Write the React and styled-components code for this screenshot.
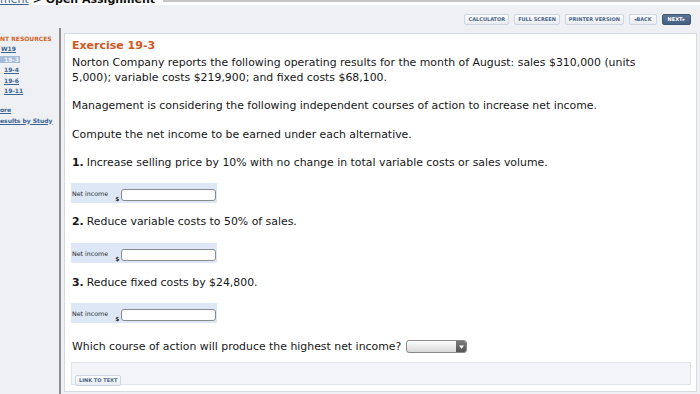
import React from 'react';
import styled, { createGlobalStyle } from 'styled-components';

const Global = createGlobalStyle`
  html, body { margin: 0; padding: 0; background: #eef0f3; }
  body { font-family: "DejaVu Sans", Verdana, sans-serif; }
  * { box-sizing: border-box; }
`;

const Page = styled.div`
  width: 700px;
  height: 394px;
  overflow: hidden;
  display: flex;
  flex-direction: column;
  background: #eef0f3;
`;

const CrumbRow = styled.div`
  height: 5px;
  flex-shrink: 0;
  display: flex;
  background: #fff;
  overflow: hidden;
`;

const Crumb = styled.div`
  font: bold 11px/13px "DejaVu Sans", Verdana, sans-serif;
  margin-top: -7px;
  white-space: nowrap;
  color: #111;
  padding-right: 8px;
`;

const CrumbLink = styled.span`
  font-weight: normal;
  color: #3d6290;
  text-decoration: underline;
`;

const CrumbFill = styled.div`
  flex: 1;
  border-top: 2px solid #c4c4c4;
`;

const Toolbar = styled.div`
  flex-shrink: 0;
  display: flex;
  justify-content: flex-end;
  align-items: flex-end;
  gap: 5px;
  padding: 9px 9px 3px 0;
  height: 23px;
`;

const Btn = styled.span`
  display: inline-flex;
  align-items: center;
  height: 11px;
  padding: 0 ${p => p.$pad || 3}px;
  font: bold 5px/1 "DejaVu Sans", Verdana, sans-serif;
  white-space: nowrap;
  border-radius: 2px;
  color: ${p => (p.$primary ? '#ffffff' : '#4c6384')};
  background: ${p => (p.$primary ? 'linear-gradient(#5b7595, #465f7e)' : 'linear-gradient(#fcfdfe, #e8ecf1)')};
  border: 1px solid ${p => (p.$primary ? '#3f5674' : '#cfd6df')};
`;

const Body = styled.div`
  flex: 1;
  min-height: 0;
  display: flex;
`;

const Sidebar = styled.div`
  width: 61px;
  flex-shrink: 0;
  border-right: 2px solid #8e8e8e;
  padding-top: 5px;
  overflow: hidden;
  white-space: nowrap;
`;

const SideHead = styled.div`
  font: bold 6px/11px "DejaVu Sans", Verdana, sans-serif;
  color: #d4622a;
`;

const SideItem = styled.div`
  font: bold 6px/10.5px "DejaVu Sans", Verdana, sans-serif;
  margin-top: ${p => p.$gap || 0}px;
  padding-left: ${p => p.$indent || 0}px;
`;

const SideLink = styled.span`
  color: ${p => (p.$active ? '#eef3fa' : '#3b6592')};
  background: ${p => (p.$active ? '#a6bbd8' : 'transparent')};
  text-decoration: underline;
  padding-left: ${p => (p.$active ? 4 : 0)}px;
  margin-left: ${p => (p.$active ? -4 : 0)}px;
  padding-right: ${p => (p.$active ? 1 : 0)}px;
`;

const Main = styled.div`
  flex: 1;
  display: flex;
  padding: 5px 3px 2px 3px;
`;

const Panel = styled.div`
  flex: 1;
  background: #fff;
  border: 1px solid #d6dae0;
  padding: 4px 6px 3px 7px;
  display: flex;
  flex-direction: column;
  align-items: flex-start;
  color: #161616;
`;

const Heading = styled.div`
  font: bold 11px/15px "DejaVu Sans", Verdana, sans-serif;
  color: #d2571e;
  margin-bottom: 2px;
`;

const Para = styled.p`
  margin: 0 0 ${p => p.$mb ?? 13}px;
  font: 10.9px/15px "DejaVu Sans", Verdana, sans-serif;
  max-width: 600px;
  display: ${p => (p.$block ? 'block' : 'flex')};
  align-items: center;
`;

const Num = styled.b`
  font-weight: bold;
  margin-right: 3px;
`;

const AnswerRow = styled.div`
  display: flex;
  align-items: flex-start;
  height: 20px;
  width: 146px;
  margin: 0 0 ${p => p.$mb ?? 12}px -1px;
  padding-left: 1px;
  background: #dde7f6;
  white-space: nowrap;
`;

const AnswerLabel = styled.span`
  font: 6.3px/7px "DejaVu Sans", Verdana, sans-serif;
  color: #2a2a2a;
  margin-top: 6.5px;
  flex-shrink: 0;
`;

const Dollar = styled.span`
  font: bold 6px/7px "DejaVu Sans", Verdana, sans-serif;
  color: #333;
  margin: 11.5px 2px 0 7px;
  flex-shrink: 0;
`;

const AnswerInput = styled.input`
  width: 95px;
  flex-shrink: 0;
  height: 12px;
  margin-top: 6px;
  padding: 0 3px;
  border: 1px solid #8b8b8b;
  border-radius: 3px;
  background: #fff;
  outline: none;
`;

const SelectBox = styled.span`
  display: inline-flex;
  width: 61px;
  height: 13px;
  margin-left: 5px;
  border: 1px solid #8a8a8a;
  border-radius: 3px;
  overflow: hidden;
  background: linear-gradient(#fdfdfd, #d9d9d9);
  justify-content: flex-end;
`;

const SelectArrow = styled.span`
  width: 10px;
  display: flex;
  align-items: center;
  justify-content: center;
  background: linear-gradient(#7a7a7a, #555);
`;

const LinkBox = styled.div`
  align-self: stretch;
  margin: 0 -1px;
  height: 23px;
  padding: 4px 3px;
  background: #f3f5f9;
  border: 1px solid #dfe3e9;
`;

export default function App() {
  return (
    <Page>
      <Global />
      <CrumbRow>
        <Crumb>
          <CrumbLink>ment</CrumbLink> &gt; Open Assignment
        </Crumb>
        <CrumbFill />
      </CrumbRow>
      <Toolbar>
        <Btn>CALCULATOR</Btn>
        <Btn>FULL SCREEN</Btn>
        <Btn>PRINTER VERSION</Btn>
        <Btn $pad={4}>◂BACK</Btn>
        <Btn $primary $pad={5}>NEXT▸</Btn>
      </Toolbar>
      <Body>
        <Sidebar>
          <SideHead>NT RESOURCES</SideHead>
          <SideItem $indent={1}><SideLink>W19</SideLink></SideItem>
          <SideItem $indent={4}><SideLink $active>19-3</SideLink></SideItem>
          <SideItem $indent={4}><SideLink>19-4</SideLink></SideItem>
          <SideItem $indent={4}><SideLink>19-6</SideLink></SideItem>
          <SideItem $indent={4}><SideLink>19-11</SideLink></SideItem>
          <SideItem $indent={0} $gap={8.5}><SideLink>ore</SideLink></SideItem>
          <SideItem><SideLink>esults by Study</SideLink></SideItem>
        </Sidebar>
        <Main>
          <Panel>
            <Heading>Exercise 19-3</Heading>
            <Para $block>
              Norton Company reports the following operating results for the month of August: sales $310,000 (units 5,000); variable costs $219,900; and fixed costs $68,100.
            </Para>
            <Para $mb={14}>Management is considering the following independent courses of action to increase net income.</Para>
            <Para>Compute the net income to be earned under each alternative.</Para>
            <Para><Num>1.</Num>Increase selling price by 10% with no change in total variable costs or sales volume.</Para>
            <AnswerRow $mb={11}>
              <AnswerLabel>Net income</AnswerLabel>
              <Dollar>$</Dollar>
              <AnswerInput aria-label="Net income 1" />
            </AnswerRow>
            <Para $mb={14}><Num>2.</Num>Reduce variable costs to 50% of sales.</Para>
            <AnswerRow>
              <AnswerLabel>Net income</AnswerLabel>
              <Dollar>$</Dollar>
              <AnswerInput aria-label="Net income 2" />
            </AnswerRow>
            <Para><Num>3.</Num>Reduce fixed costs by $24,800.</Para>
            <AnswerRow $mb={16}>
              <AnswerLabel>Net income</AnswerLabel>
              <Dollar>$</Dollar>
              <AnswerInput aria-label="Net income 3" />
            </AnswerRow>
            <Para $mb={8}>
              Which course of action will produce the highest net income?
              <SelectBox>
                <SelectArrow>
                  <svg width="5" height="4" viewBox="0 0 5 4"><path d="M0 0.5 H5 L2.5 3.8 Z" fill="#fff" /></svg>
                </SelectArrow>
              </SelectBox>
            </Para>
            <LinkBox>
              <Btn>LINK TO TEXT</Btn>
            </LinkBox>
          </Panel>
        </Main>
      </Body>
    </Page>
  );
}
